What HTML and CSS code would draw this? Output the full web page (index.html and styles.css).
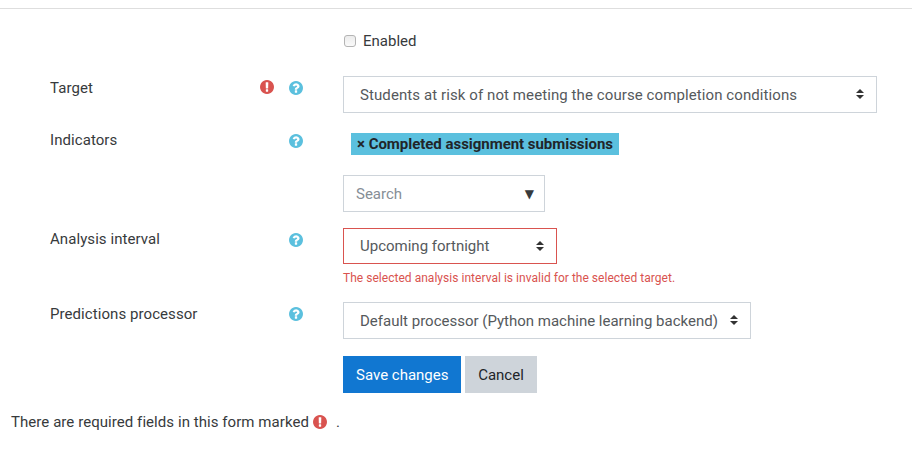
FILE: index.html
```html
<!DOCTYPE html>
<html lang="en">
<head>
    <meta charset="UTF-8">
    <meta name="viewport" content="width=device-width, initial-scale=1.0">
    <title>Edit model</title>
    <link rel="stylesheet" href="styles.css">
</head>
<body>
    <svg class="icon-defs" width="0" height="0">
        <symbol id="icon-help" viewBox="128 128 1536 1536">
            <path d="M1024 1376v-192q0-14-9-23t-23-9h-192q-14 0-23 9t-9 23v192q0 14 9 23t23 9h192q14 0 23-9t9-23zm256-672q0-88-55.5-163t-138.5-116-170-41q-243 0-371 213-15 24 8 42l132 100q7 6 19 6 16 0 25-12 53-68 86-92 34-24 86-24 48 0 85.5 26t37.5 59q0 38-20 61t-68 45q-63 28-115.5 86.5t-52.5 125.5v36q0 14 9 23t23 9h192q14 0 23-9t9-23q0-19 21.5-49.5t54.5-49.5q32-18 49-28.5t46-35 44.5-48 28-60.5 12.5-81zm384 192q0 209-103 385.5t-279.5 279.5-385.5 103-385.5-103-279.5-279.5-103-385.5 103-385.5 279.5-279.5 385.5-103 385.5 103 279.5 279.5 103 385.5z"/>
        </symbol>
        <symbol id="icon-required" viewBox="128 128 1536 1536">
            <path d="M896 128q209 0 385.5 103t279.5 279.5 103 385.5-103 385.5-279.5 279.5-385.5 103-385.5-103-279.5-279.5-103-385.5 103-385.5 279.5-279.5 385.5-103zm128 1247v-190q0-14-9-23.5t-22-9.5h-192q-13 0-23 10t-10 23v190q0 13 10 23t23 10h192q13 0 22-9.5t9-23.5zm-2-344l18-621q0-12-10-18-10-8-24-8h-220q-14 0-24 8-10 6-10 18l17 621q0 10 10 17.5t24 7.5h185q14 0 23.5-7.5t10.5-17.5z"/>
        </symbol>
    </svg>

    <form class="mform">
        <div class="form-row row-enabled">
            <div class="form-field">
                <label class="check"><input type="checkbox">Enabled</label>
            </div>
        </div>

        <div class="form-row row-target">
            <div class="form-label">
                <label for="target">Target</label>
                <svg class="icon required"><use href="#icon-required"/></svg>
                <svg class="icon help"><use href="#icon-help"/></svg>
            </div>
            <div class="form-field">
                <select id="target" class="custom-select">
                    <option>Students at risk of not meeting the course completion conditions</option>
                </select>
            </div>
        </div>

        <div class="form-row row-indicators">
            <div class="form-label">
                <label for="indicators">Indicators</label>
                <svg class="icon help"><use href="#icon-help"/></svg>
            </div>
            <div class="form-field">
                <div class="selection"><span class="tag">× Completed assignment submissions</span></div>
                <div class="search-box">
                    <input id="indicators" type="text" placeholder="Search">
                    <span class="down-arrow">▼</span>
                </div>
            </div>
        </div>

        <div class="form-row row-interval">
            <div class="form-label">
                <label for="interval">Analysis interval</label>
                <svg class="icon help"><use href="#icon-help"/></svg>
            </div>
            <div class="form-field">
                <select id="interval" class="custom-select invalid">
                    <option>Upcoming fortnight</option>
                </select>
                <div class="feedback">The selected analysis interval is invalid for the selected target.</div>
            </div>
        </div>

        <div class="form-row row-processor">
            <div class="form-label">
                <label for="processor">Predictions processor</label>
                <svg class="icon help"><use href="#icon-help"/></svg>
            </div>
            <div class="form-field">
                <select id="processor" class="custom-select">
                    <option>Default processor (Python machine learning backend)</option>
                </select>
            </div>
        </div>

        <div class="form-row row-buttons">
            <div class="form-field buttons">
                <button type="button" class="btn btn-primary">Save changes</button>
                <button type="button" class="btn btn-secondary">Cancel</button>
            </div>
        </div>

        <div class="required-note">
            <span>There are required fields in this form marked</span>
            <svg class="icon required"><use href="#icon-required"/></svg>
            <span>.</span>
        </div>
    </form>
</body>
</html>
```
FILE: styles.css
```css
:root {
    --primary: #1177d1;
    --danger: #d9534f;
    --info: #5bc0de;
    --text: #373a3c;
    --border: #ced4da;
}

* {
    box-sizing: border-box;
}

body {
    margin: 0;
    padding-top: 8px;
    background: #fff;
    color: var(--text);
    font-family: Roboto, "Liberation Sans", sans-serif;
    font-size: 15px;
    line-height: 23px;
    overflow: hidden;
}

input, select, button {
    font: inherit;
    margin: 0;
}

.icon-defs {
    display: none;
}

.mform {
    border-top: 1px solid #dedede;
    padding: 20px 35px 0 50px;
}

.form-row {
    display: grid;
    grid-template-columns: 293px 1fr;
}

.form-label {
    display: flex;
    align-items: flex-start;
    padding-right: 40px;
}

.form-label label {
    flex: 1;
    letter-spacing: 0.07px;
}

.form-field {
    grid-column: 2;
}

.icon {
    width: 14px;
    height: 14px;
    margin-top: 5px;
}

.required {
    fill: var(--danger);
}

.help {
    fill: var(--info);
    margin-left: 15px;
}

.row-enabled {
    height: 47px;
}

.row-target {
    height: 53px;
}

.row-indicators {
    height: 99px;
}

.row-interval {
    height: 74px;
}

.row-processor {
    height: 54px;
}

.row-target label,
.row-processor label {
    padding-top: 1px;
}

.row-target .required {
    margin-top: 4px;
}

.check {
    display: flex;
    align-items: center;
    padding-top: 1px;
}

.check input {
    appearance: none;
    width: 12px;
    height: 12px;
    margin: -1px 7px 0 1px;
    border: 1px solid #b4b4b4;
    border-radius: 3px;
    background: linear-gradient(#ececec, #fafafa);
}

.custom-select {
    appearance: none;
    display: block;
    height: 37px;
    padding: 2px 32px 0 16px;
    border: 1px solid var(--border);
    border-radius: 0;
    color: #55595c;
    background: #fff url("data:image/svg+xml,%3Csvg xmlns='http://www.w3.org/2000/svg' viewBox='0 0 4 5'%3E%3Cpath fill='%23333' d='M2 0L0 2h4zm0 5L0 3h4z'/%3E%3C/svg%3E") no-repeat right 12px top 12px;
    background-size: 8px 10px;
}

.custom-select.invalid {
    height: 36px;
    padding-top: 0;
    border-color: var(--danger);
}

#target {
    width: 534px;
    letter-spacing: 0.09px;
}

#interval {
    width: 214px;
}

#processor {
    width: 408px;
}

.selection {
    height: 46px;
    padding: 4px 8px 0;
}

.tag {
    display: inline-block;
    height: 22px;
    padding: 0 6px;
    background: var(--info);
    color: #212529;
    font-weight: bold;
    letter-spacing: -0.03px;
    line-height: 22px;
}

.search-box {
    display: flex;
    align-items: center;
    width: 202px;
    height: 37px;
    padding: 0 10px 0 12px;
    border: 1px solid var(--border);
}

.search-box input {
    flex: 1;
    min-width: 0;
    padding: 2px 0 0;
    border: 0;
    outline: 0;
}

.search-box input::placeholder {
    color: #868e96;
}

.down-arrow {
    padding-top: 2px;
    font-family: "DejaVu Sans", sans-serif;
    font-size: 12px;
}

.feedback {
    margin-top: 3px;
    color: var(--danger);
    font-size: 12px;
    letter-spacing: 0.03px;
}

.buttons {
    display: flex;
    gap: 4px;
}

.btn {
    height: 37px;
    padding: 2px 13px 0;
    border: 0;
    white-space: nowrap;
}

.btn-primary {
    width: 118px;
    background: var(--primary);
    color: #fff;
}

.btn-secondary {
    width: 72px;
    background: var(--border);
    color: #212529;
}

.required-note {
    display: flex;
    gap: 4px;
    margin: 18px 0 0 -39px;
    letter-spacing: 0.06px;
}

.required-note .icon {
    margin: 4px 5px 0 0;
}
```
